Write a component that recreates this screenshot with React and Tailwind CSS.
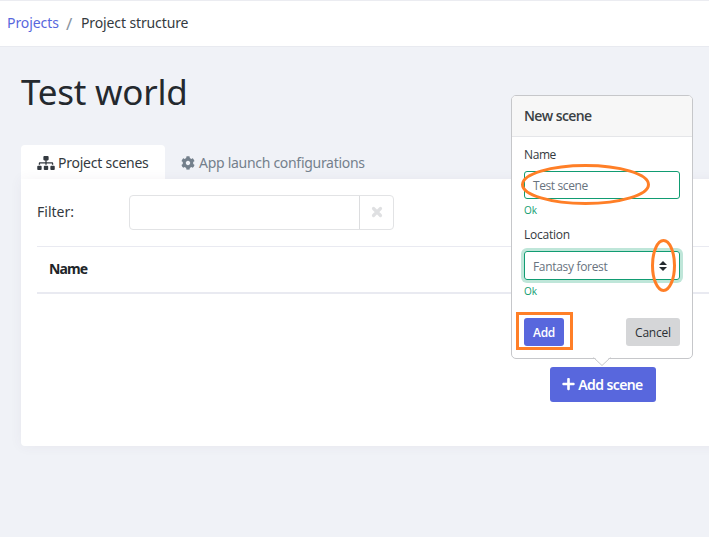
import React from "react";
import { FaSitemap, FaCog, FaPlus } from "react-icons/fa";

function Breadcrumb() {
  return (
    <nav className="flex h-[47px] items-center border-t border-b border-t-[#ebecf1] border-b-[#e8eaf0] bg-white pl-[7px] text-[14px] leading-5 whitespace-nowrap">
      <a className="mb-px w-[52px] tracking-[-0.08px] text-[#5867dd]">Projects</a>
      <span className="w-[22px] pl-[7px] text-[17px] text-[#8a94a0]">/</span>
      <span className="mb-px tracking-[-0.12px]">Project structure</span>
    </nav>
  );
}

function Tabs() {
  return (
    <div className="flex h-[34px] whitespace-nowrap leading-5">
      <div className="flex w-[144px] items-center rounded-t-[4px] bg-white pl-[16px] pt-[2px] text-[#343a40]">
        <FaSitemap className="mr-[3px] h-[14px] w-[18px] shrink-0" />
        <span className="tracking-[-0.24px]">Project scenes</span>
      </div>
      <div className="flex items-center pl-[16px] pt-[2px] text-[#74808c]">
        <FaCog className="mr-[4px] h-[14px] w-[14px] shrink-0" />
        <span className="tracking-[-0.29px]">App launch configurations</span>
      </div>
    </div>
  );
}

function ScenesPanel() {
  return (
    <div className="flex h-[267px] w-[760px] flex-col rounded-b-[4px] bg-white px-[16px] pt-[16px] shadow-[0_0_13px_rgba(82,63,105,0.06)]">
      <div className="flex h-[35px] items-center">
        <label className="w-[92px] pb-px leading-5">Filter:</label>
        <div className="flex h-[35px] w-[265px] rounded-[4px] border border-[#e2e3e5]">
          <div className="flex-1" />
          <button className="flex w-[34px] items-center justify-center border-l border-[#dcdddf] pb-px text-[#dfe0e2]">
            <svg className="h-[12px] w-[12px]" viewBox="0 0 12 12" stroke="currentColor" strokeWidth="3.2" strokeLinecap="round">
              <path d="M2.5 2.5 9.5 9.5M9.5 2.5 2.5 9.5" />
            </svg>
          </button>
        </div>
      </div>
      <div className="mt-[16px] flex h-[48px] items-center border-t border-b-2 border-[#e9eaf1] pb-[2px] pl-[12px] font-bold text-[#212529]">
        <span className="tracking-[-0.85px]">Name</span>
      </div>
      <button className="mt-[73px] ml-[513px] flex h-[35px] w-[106px] shrink-0 items-center justify-center rounded-[3px] bg-[#5867dd] pb-px pr-px font-semibold whitespace-nowrap text-white">
        <FaPlus className="mr-[3px] h-[14px] w-[13px]" />
        <span className="tracking-[-0.6px]">Add scene</span>
      </button>
    </div>
  );
}

function Popover() {
  return (
    <section className="absolute left-[511px] top-[95px] flex h-[264px] w-[182px] flex-col rounded-[5px] border border-[#c6c7ca] bg-white font-['Open_Sans','Noto_Sans',sans-serif] text-[12px] leading-[18px] text-[#343a40]">
      <header className="flex h-[41px] items-center rounded-t-[4px] border-b border-[#e5e6e9] bg-[#f7f7f7] pl-[12px] text-[14px] font-semibold text-[#3a3f44]">
        <span className="tracking-[-0.6px]">New scene</span>
      </header>
      <div className="flex flex-1 flex-col px-[12px]">
        <label className="mt-[9px] h-[18px] tracking-[-0.4px]">Name</label>
        <div className="mt-[7px] flex h-[28px] items-center rounded-[3px] border border-[#119c72] pt-px pl-[8px] text-[#68737e]">
          <span className="tracking-[-0.4px]">Test scene</span>
        </div>
        <span className="mt-[3px] h-[16px] text-[10px] leading-[16px] text-[#0f9d70]">Ok</span>
        <label className="mt-[8px] h-[18px] tracking-[-0.25px]">Location</label>
        <div className="mt-[7px] flex h-[29px] items-center justify-between rounded-[3px] border border-[#119c72] pr-[12px] pl-[8px] text-[#68737e] shadow-[0_0_0_3px_#bfe6d9]">
          <span className="pt-[2px] tracking-[-0.32px]">Fantasy forest</span>
          <svg className="h-[10px] w-[8px]" viewBox="0 0 8 10" fill="#252a2e">
            <path d="M4 0 8 4H0ZM0 6H8L4 10Z" />
          </svg>
        </div>
        <span className="mt-[3px] h-[16px] text-[10px] leading-[16px] text-[#0f9d70]">Ok</span>
        <div className="mt-[19px] flex justify-between">
          <button className="h-[28px] w-[40px] rounded-[3px] bg-[#5867dd] pt-px font-semibold tracking-[-0.3px] text-white">Add</button>
          <button className="h-[28px] w-[54px] rounded-[3px] bg-[#d5d6d8] pt-px tracking-[-0.2px] text-[#2b3035]">Cancel</button>
        </div>
      </div>
      <svg className="absolute left-[81px] top-[261px] h-[9px] w-[18px]" viewBox="0 0 18 9">
        <path d="M1 0 9 8 17 0Z" fill="#fff" />
        <path d="M.5.5 9 8.5 17.5.5" fill="none" stroke="#c6c7ca" />
      </svg>
    </section>
  );
}

function Highlights() {
  return (
    <svg className="absolute top-0 left-0 h-[537px] w-[709px]" viewBox="0 0 709 537" fill="none" stroke="#ff7f27" strokeWidth="3">
      <ellipse cx="585.5" cy="184.5" rx="63" ry="19" />
      <ellipse cx="663.5" cy="265.5" rx="11" ry="25" />
      <rect x="517.5" y="313.5" width="54" height="35" />
    </svg>
  );
}

export default function App() {
  return (
    <div className="relative h-[537px] w-[709px] overflow-hidden bg-[#f0f2f7] font-['Noto_Sans','Open_Sans',sans-serif] text-[14px] text-[#343a40]">
      <Breadcrumb />
      <main className="flex flex-col pl-[21px]">
        <h1 className="mt-[20px] mb-[28px] h-[50px] text-[35px] leading-[50px] font-normal tracking-[-0.25px] text-[#24292e]">Test world</h1>
        <Tabs />
        <ScenesPanel />
      </main>
      <Popover />
      <Highlights />
    </div>
  );
}
